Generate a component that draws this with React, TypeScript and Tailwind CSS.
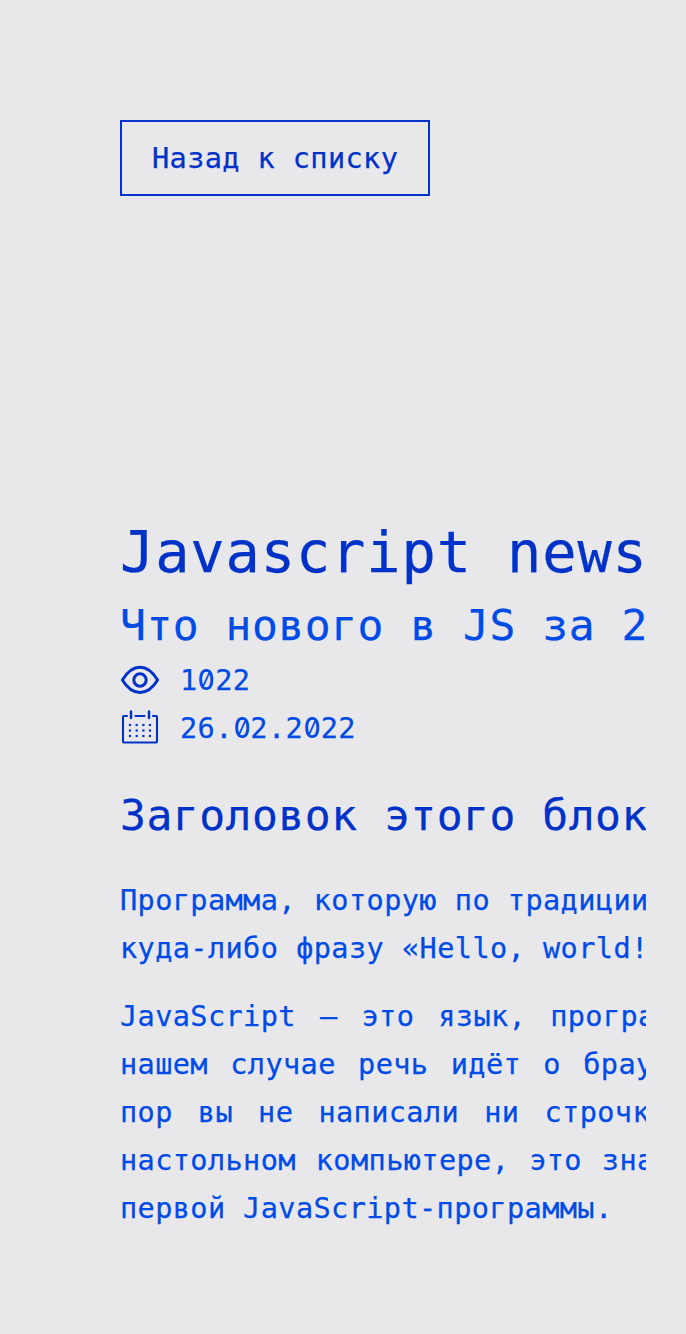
import React from 'react';

function EyeIcon() {
  return (
    <svg width="40" height="32" viewBox="0 0 40 32" fill="none" stroke="#0032c8" strokeWidth="3">
      <path d="M2.4 16C7 8.3 12.5 3.2 20 3.2S33 8.3 37.6 16C33 23.7 27.5 28.4 20 28.4S7 23.7 2.4 16Z" strokeLinejoin="round" />
      <circle cx="20" cy="16" r="6.2" />
    </svg>
  );
}

function CalendarIcon() {
  const columns = [10, 16.7, 23.4, 30];
  const rows = [15, 20.5, 26];
  return (
    <svg width="40" height="40" viewBox="0 0 40 40" fill="none" stroke="#0032c8" strokeWidth="2.1" strokeLinejoin="round" strokeLinecap="round">
      <path d="M7 6H4Q3 6 3 7V31.3Q3 32.5 4 32.5H36Q37 32.5 37 31.3V7Q37 6 36 6H33M15.5 6H24.5" />
      <path d="M11 1.5V8M29 1.5V8" strokeWidth="2.4" />
      {rows.map((y) =>
        columns.map((x) => (
          <rect key={`${x}-${y}`} x={x - 1.1} y={y - 1.1} width="2.2" height="2.2" fill="#0032c8" stroke="none" />
        )),
      )}
    </svg>
  );
}

function Digits({ value }: { value: string }) {
  return (
    <span>
      {value.split('').map((c, i) =>
        c === '0' ? (
          <span key={i} className="inline-flex w-[17.59px] justify-center font-['Inter'] text-[28px] leading-none font-medium tracking-normal [font-feature-settings:'zero'] [-webkit-text-stroke:0px]">
            <span className="scale-x-[0.93]">0</span>
          </span>
        ) : (
          c
        ),
      )}
    </span>
  );
}

export default function App() {
  return (
    <main className="h-[1334px] w-[686px] overflow-hidden bg-[#e8e8ea] pr-10 pl-[120px] pt-[120px] font-['DejaVu_Sans_Mono',monospace] text-[28.6px] leading-[48px] tracking-[0.374px] text-[#004be6] [-webkit-text-stroke:0.25px]">
      <button className="block h-[76px] w-[310px] whitespace-nowrap border-2 border-[#0032c8] pl-[30px] text-left text-[#0032c8]">
        Назад к списку
      </button>
      <article className="mt-[316px] w-[526px] overflow-hidden whitespace-nowrap">
        <h1 className="h-[81px] text-[57px] leading-[80px] tracking-[0.87px] text-[#0032c8]">Javascript news</h1>
        <h2 className="h-[63px] text-[43px] leading-[64px] tracking-[0.505px]">Что нового в JS за 2022</h2>
        <div className="flex h-12">
          <span className="w-[60px] shrink-0 pt-2"><EyeIcon /></span>
          <Digits value="1022" />
        </div>
        <div className="flex h-12">
          <span className="w-[60px] shrink-0 pt-1.5"><CalendarIcon /></span>
          <Digits value="26.02.2022" />
        </div>
        <h3 className="mt-[31px] text-[43px] leading-[64px] tracking-[0.505px] text-[#0032c8]">Заголовок этого блока</h3>
        <p className="mt-[29px] [word-spacing:0.3px]">
          Программа, которую по традиции
          <br />
          куда-либо фразу «Hello, world!»
        </p>
        <p className="mt-5">
          <span className="block [word-spacing:6.4px]">JavaScript — это язык, программ</span>
          <span className="block [word-spacing:4.7px]">нашем случае речь идёт о браузере</span>
          <span className="block [word-spacing:7.5px]">пор вы не написали ни строчки</span>
          <span className="block [word-spacing:2.3px]">настольном компьютере, это значит</span>
          <span className="block">первой JavaScript-программы.</span>
        </p>
      </article>
    </main>
  );
}
